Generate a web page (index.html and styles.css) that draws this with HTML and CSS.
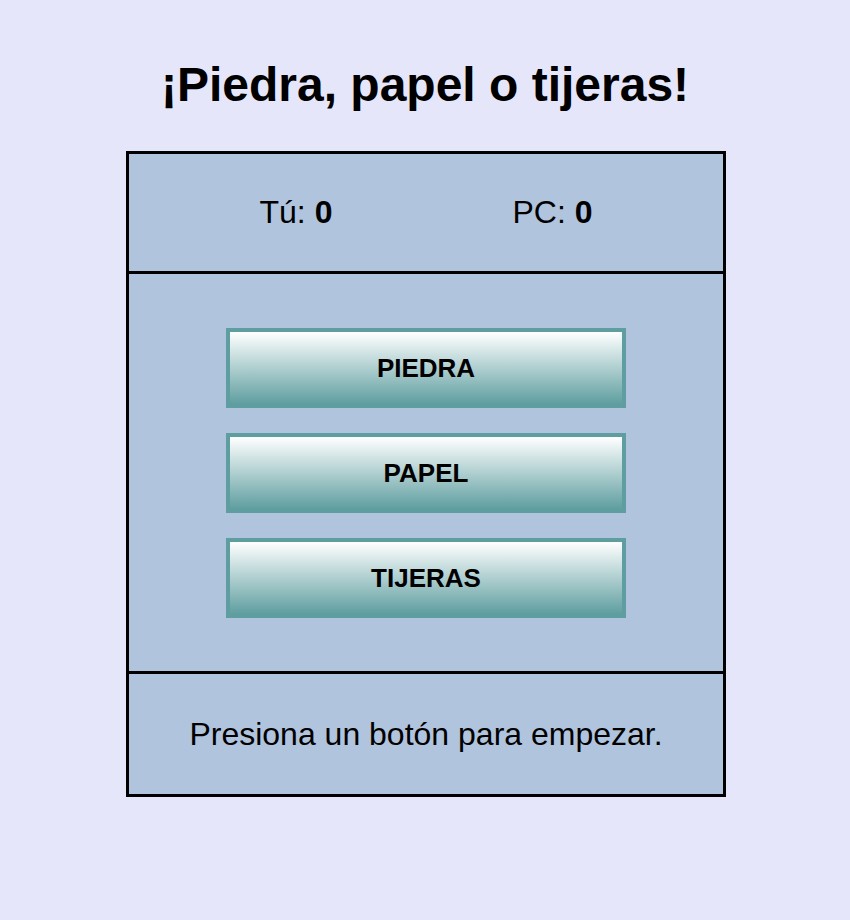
FILE: index.html
```html
<!DOCTYPE html>
<html lang="es">
<head>
<meta charset="utf-8">
<title>Piedra, papel o tijeras</title>
<link rel="stylesheet" href="styles.css">
</head>
<body>
<h1 class="title">¡Piedra, papel o tijeras!</h1>
<div class="game">
  <div class="scores">
    <div class="score">Tú: <b>0</b></div>
    <div class="score">PC: <b>0</b></div>
  </div>
  <div class="choices">
    <button class="choice">PIEDRA</button>
    <button class="choice">PAPEL</button>
    <button class="choice">TIJERAS</button>
  </div>
  <div class="message">Presiona un botón para empezar.</div>
</div>
</body>
</html>
```
FILE: styles.css
```css
html, body {
  margin: 0;
  padding: 0;
}
body {
  background: #e6e6fa;
  font-family: "Liberation Sans", Arial, sans-serif;
  color: #000;
}
.title {
  margin: 57px 0 39px;
  font-size: 48px;
  line-height: 55px;
  font-weight: bold;
  text-align: center;
}
.game {
  box-sizing: border-box;
  width: 600px;
  margin: 0 0 0 calc(50% - 299px);
  border: 3px solid #000;
  background: #b0c4de;
}
.scores {
  height: 117px;
  border-bottom: 3px solid #000;
  display: flex;
  justify-content: center;
  align-items: center;
  gap: 180px;
  font-size: 32px;
}
.score b {
  font-weight: bold;
}
.choices {
  height: 343px;
  padding-top: 54px;
  border-bottom: 3px solid #000;
  display: flex;
  flex-direction: column;
  align-items: center;
  gap: 25px;
}
.choice {
  box-sizing: border-box;
  flex: none;
  width: 400px;
  height: 80px;
  border: 4px solid #5f9ea0;
  background: linear-gradient(to bottom, #ffffff, #5f9ea0);
  font-family: "Liberation Sans", Arial, sans-serif;
  font-size: 26px;
  font-weight: bold;
  color: #000;
  padding: 0;
  cursor: pointer;
}
.message {
  height: 120px;
  display: flex;
  align-items: center;
  justify-content: center;
  font-size: 32px;
}
```
